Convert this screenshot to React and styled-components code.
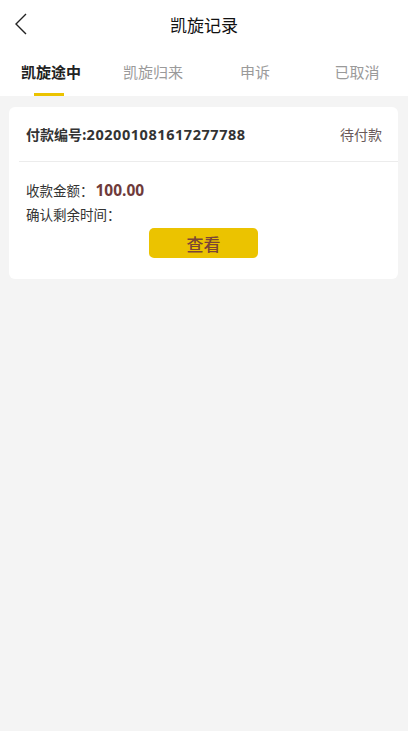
import styled, { createGlobalStyle } from "styled-components";

const GlobalStyle = createGlobalStyle`
  html, body {
    margin: 0;
    padding: 0;
    background: #f4f4f4;
  }
  body {
    font-family: "Noto Sans CJK SC", "Open Sans", sans-serif;
  }
`;

const Page = styled.div`
  width: 408px;
  min-height: 731px;
  background: #f4f4f4;
`;

const Header = styled.div`
  height: 50px;
  background: #fff;
  display: flex;
  align-items: center;
  justify-content: center;
  position: relative;
`;

const Back = styled.button`
  position: absolute;
  left: 12px;
  top: 12px;
  border: none;
  background: none;
  padding: 0;
  width: 20px;
  height: 24px;
  cursor: pointer;
`;

const Title = styled.div`
  font-size: 17px;
  color: #111;
  margin-top: -1px;
`;

const Tabs = styled.div`
  display: grid;
  grid-template-columns: repeat(4, 1fr);
  background: #fff;
  height: 46px;
`;

const Tab = styled.div`
  position: relative;
  display: flex;
  justify-content: center;
  padding-top: 11px;
  font-size: 15px;
  font-weight: ${(p) => (p.active ? 700 : 400)};
  color: ${(p) => (p.active ? "#222" : "#9a9a9a")};

  &::after {
    content: "";
    display: ${(p) => (p.active ? "block" : "none")};
    position: absolute;
    bottom: 0;
    left: 50%;
    margin-left: -17px;
    width: 30px;
    height: 3px;
    background: #ebc300;
  }
`;

const Content = styled.div`
  padding: 11px 10px 0 9px;
`;

const Card = styled.div`
  background: #fff;
  border-radius: 6px;
  padding-bottom: 21px;
`;

const CardHead = styled.div`
  display: flex;
  justify-content: space-between;
  align-items: center;
  height: 54px;
  margin-left: 10px;
  padding: 0 16px 0 7px;
  border-bottom: 1px solid #ececec;
`;

const OrderNo = styled.div`
  font-size: 14px;
  font-weight: 700;
  color: #333;
`;

const Digits = styled.span`
  font-family: "Open Sans", "Noto Sans CJK SC", sans-serif;
  font-size: 14.5px;
  letter-spacing: 0.55px;
`;

const Status = styled.div`
  font-size: 14px;
  color: #6a5a5a;
`;

const Body = styled.div`
  padding: 16px 17px 0 17px;
`;

const Line = styled.div`
  font-size: 13.5px;
  color: #333;
  line-height: 24px;
  display: flex;
  align-items: baseline;
`;

const Amount = styled.span`
  font-size: 15.5px;
  font-weight: 700;
  color: #6e3a3a;
  margin-left: 2px;
  font-family: "Open Sans", "Noto Sans CJK SC", sans-serif;
`;

const Actions = styled.div`
  display: flex;
  justify-content: center;
  margin-top: 2px;
`;

const ViewButton = styled.button`
  width: 109px;
  height: 30px;
  border: none;
  border-radius: 5px;
  background: #ebc300;
  color: #7a4536;
  font-size: 17px;
  font-weight: 500;
  font-family: "Noto Sans CJK SC", sans-serif;
  padding: 0;
  cursor: pointer;
`;

const tabs = ["凯旋途中", "凯旋归来", "申诉", "已取消"];

const App = () => {
  return (
    <Page>
      <GlobalStyle />
      <Header>
        <Back>
          <svg width="20" height="24" viewBox="0 0 20 24">
            <path d="M14 2 L4 12 L14 22" fill="none" stroke="#222" strokeWidth="1.4" />
          </svg>
        </Back>
        <Title>凯旋记录</Title>
      </Header>
      <Tabs>
        {tabs.map((t, i) => (
          <Tab key={t} active={i === 0}>
            {t}
          </Tab>
        ))}
      </Tabs>
      <Content>
        <Card>
          <CardHead>
            <OrderNo>
              付款编号:<Digits>202001081617277788</Digits>
            </OrderNo>
            <Status>待付款</Status>
          </CardHead>
          <Body>
            <Line>
              收款金额：<Amount>100.00</Amount>
            </Line>
            <Line>确认剩余时间：</Line>
            <Actions>
              <ViewButton>查看</ViewButton>
            </Actions>
          </Body>
        </Card>
      </Content>
    </Page>
  );
};

export default App;
